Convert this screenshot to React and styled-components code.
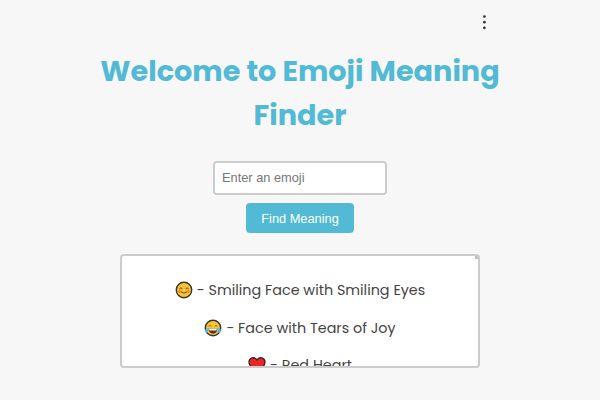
import React from 'react';
import styled, { createGlobalStyle } from 'styled-components';

const GlobalStyle = createGlobalStyle`
  * { box-sizing: border-box; }
  body { margin: 0; background: #f7f7f7; }
`;

const Page = styled.main`
  width: 600px;
  height: 400px;
  overflow: hidden;
  display: flex;
  flex-direction: column;
  align-items: center;
  background: #f7f7f7;
  color: #444;
  font-family: Poppins, Inter, sans-serif;
`;

const TopBar = styled.header`
  width: 100%;
  height: 50px;
  padding: 12px 106px 0 0;
  display: flex;
  justify-content: flex-end;
`;

const MenuButton = styled.button`
  width: 20px;
  height: 20px;
  padding: 0;
  border: 0;
  background: none;
  svg { display: block; }
`;

const Title = styled.h1`
  margin: 0;
  height: 111px;
  color: #52bad5;
  font-size: 28.7px;
  font-weight: 700;
  line-height: 43.5px;
  text-align: center;
`;

const TitleLine = styled.span`
  display: block;
  white-space: nowrap;
`;

const Form = styled.form`
  display: flex;
  flex-direction: column;
  align-items: center;
  gap: 8px;
`;

const EmojiInput = styled.input`
  width: 174px;
  height: 34px;
  padding: 0 7px 1px;
  border: 2px solid #ccc;
  border-radius: 4px;
  background: #fff;
  font: 12.8px "Liberation Sans", Arial, sans-serif;
  &::placeholder { color: #777; opacity: 1; }
`;

const FindButton = styled.button`
  width: 108px;
  height: 30px;
  padding: 0;
  border: 0;
  border-radius: 4px;
  background: #52bad5;
  color: #fff;
  font: 12.8px "Liberation Sans", Arial, sans-serif;
`;

const Results = styled.section`
  position: relative;
  width: 360px;
  height: 114px;
  margin-top: 21px;
  padding-top: 23px;
  border: 2px solid #ccc;
  border-radius: 4px;
  background: #fff;
  overflow: hidden;
`;

const ScrollThumb = styled.span`
  position: absolute;
  top: -1px;
  right: -1px;
  width: 4px;
  height: 4px;
  background: #bbb;
`;

const Row = styled.div`
  height: 37.5px;
  display: flex;
  align-items: flex-start;
  justify-content: center;
  gap: 4px;
  line-height: 22px;
  font-size: 14.35px;
  white-space: nowrap;
  svg { flex: none; margin-top: 2px; }
`;

const Face = ({ children }) => (
  <svg width="18" height="18" viewBox="0 0 18 18">
    <circle cx="9" cy="9" r="7.7" fill="#fbc52f" stroke="#353535" strokeWidth="1.4" />
    {children}
  </svg>
);

const SmilingFace = () => (
  <Face>
    <circle cx="4.7" cy="10.4" r="1.4" fill="#f4833d" />
    <circle cx="13.3" cy="10.4" r="1.4" fill="#f4833d" />
    <path d="M4.6 7.6q1.3-1.8 2.6 0M10.8 7.6q1.3-1.8 2.6 0M6.2 11q2.8 2.7 5.6 0" fill="none" stroke="#4b3b22" strokeWidth=".9" strokeLinecap="round" />
  </Face>
);

const JoyFace = () => (
  <Face>
    <path d="M4.6 7.3q1.4-1.8 2.8 0M10.6 7.3q1.4-1.8 2.8 0" fill="none" stroke="#80611f" strokeWidth=".9" />
    <path d="M4.6 9.8h8.8q-.5 4.9-4.4 4.9t-4.4-4.9Z" fill="#57352d" />
    <path d="M5 9.8h8l-.6 1.8H5.6Z" fill="#f5f5f5" />
    <path d="M4.8 9C2.4 9 .9 10.5 1.1 12.4c.3 1.9 2.7 1.7 3.2 0ZM13.2 9c2.4 0 3.9 1.5 3.7 3.4-.3 1.9-2.7 1.7-3.2 0Z" fill="#55b9ed" />
  </Face>
);

const Heart = () => (
  <svg width="18" height="18" viewBox="0 0 18 18">
    <path d="M9 16.2C5.4 13.7 1 9.8 1 6 1 1.6 6.8.2 9 4 11.2.2 17 1.6 17 6c0 3.8-4.4 7.7-8 10.2Z" fill="#ea2524" stroke="#3a2020" strokeWidth="1.3" />
  </svg>
);

const entries = [
  { icon: <SmilingFace />, text: '- Smiling Face with Smiling Eyes' },
  { icon: <JoyFace />, text: '- Face with Tears of Joy' },
  { icon: <Heart />, text: '- Red Heart' },
];

export default function App() {
  return (
    <Page>
      <GlobalStyle />
      <TopBar>
        <MenuButton type="button" aria-label="Menu">
          <svg width="20" height="20" viewBox="0 0 20 20" fill="#333">
            <circle cx="10.4" cy="4.5" r="1.35" />
            <circle cx="10.4" cy="10.2" r="1.35" />
            <circle cx="10.4" cy="15.8" r="1.35" />
          </svg>
        </MenuButton>
      </TopBar>
      <Title>
        <TitleLine>Welcome to Emoji Meaning</TitleLine>
        <TitleLine>Finder</TitleLine>
      </Title>
      <Form onSubmit={(event) => event.preventDefault()}>
        <EmojiInput placeholder="Enter an emoji" />
        <FindButton>Find Meaning</FindButton>
      </Form>
      <Results>
        {entries.map(({ icon, text }) => (
          <Row key={text}>
            {icon}
            <span>{text}</span>
          </Row>
        ))}
        <ScrollThumb />
      </Results>
    </Page>
  );
}
